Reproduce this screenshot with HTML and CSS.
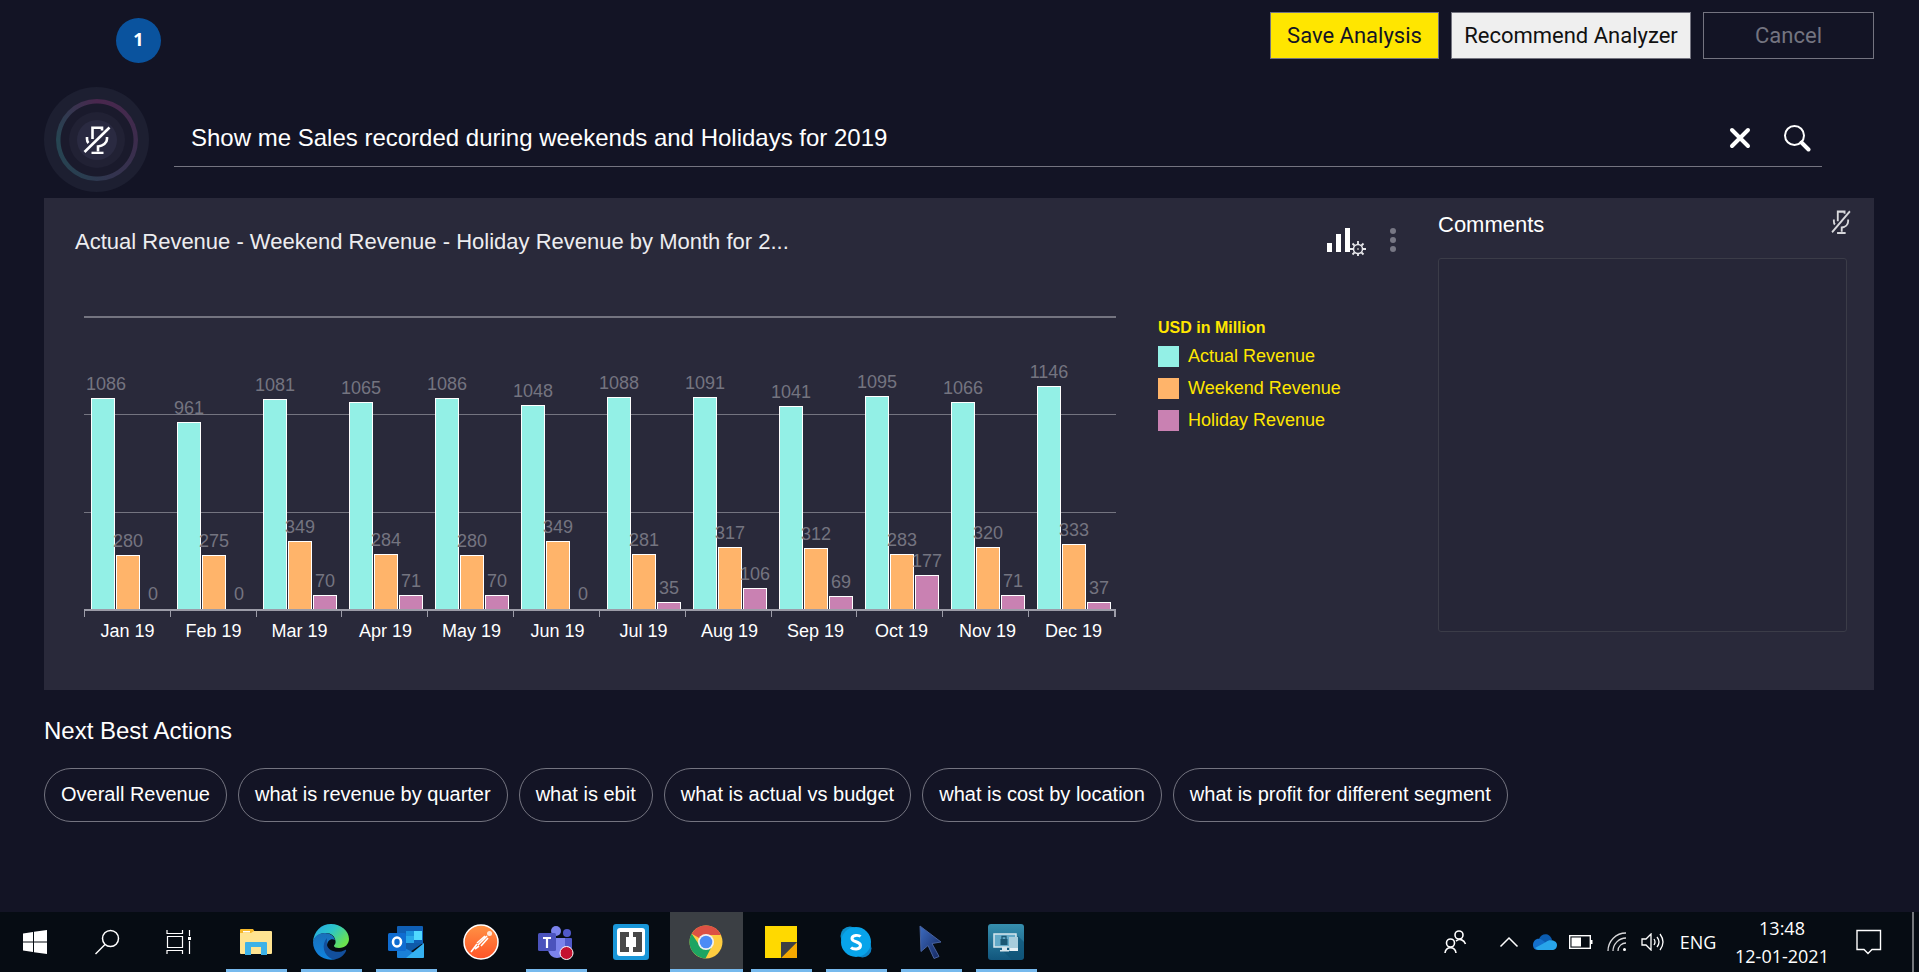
FILE: index.html
```html
<!DOCTYPE html>
<html lang="en">
<head>
<meta charset="utf-8">
<title>Revenue analysis</title>
<link rel="stylesheet" href="styles.css">
</head>
<body>
<svg class="sprite" aria-hidden="true">
  <symbol id="mic-off" viewBox="0 0 28 28">
    <g fill="none" stroke="currentColor" stroke-width="2.600">
      <path d="M9.500 13V1.800h9.500v2.700"/>
      <path d="M4 11v2c0 2 .5 3 1.500 4"/>
      <path d="M24 11v2c0 4-4 7-9 7.500v5"/>
      <path d="M8.500 27h12"/>
      <path d="M1.500 26L26.500 1.500"/>
    </g>
  </symbol>
</svg>

<main class="page">
  <header class="topbar">
    <span class="badge">1</span>
    <div class="actions">
      <button class="btn btn-save" type="button">Save Analysis</button>
      <button class="btn btn-recommend" type="button">Recommend Analyzer</button>
      <button class="btn btn-cancel" type="button">Cancel</button>
    </div>
  </header>

  <form class="search-row">
    <button class="mic" type="button" aria-label="Microphone off">
      <span class="mic-ring"><span class="mic-disc"><span class="mic-core"><svg class="mic-icon"><use href="#mic-off"/></svg></span></span></span>
    </button>
    <div class="search-field">
      <input class="search-input" type="text" aria-label="Ask a question" value="Show me Sales recorded during weekends and Holidays for 2019">
      <button class="icon-btn" type="button" aria-label="Clear">
        <svg width="22" height="22" viewBox="0 0 22 22"><path d="M3 3l16 16M19 3L3 19" stroke="#fff" stroke-width="4" stroke-linecap="round"/></svg>
      </button>
      <button class="icon-btn" type="button" aria-label="Search">
        <svg width="28" height="28" viewBox="0 0 28 28" fill="none" stroke="#fff"><circle cx="11.500" cy="11.500" r="9.500" stroke-width="2"/><path d="M18.500 18.500l7 7" stroke-width="4" stroke-linecap="round"/></svg>
      </button>
    </div>
  </form>

  <section class="panel">
    <div class="chart-area">
      <div class="chart-head">
        <h2 class="chart-title">Actual Revenue - Weekend Revenue - Holiday Revenue by Month for 2...</h2>
        <button class="icon-btn" type="button" aria-label="Chart settings">
          <svg width="42" height="32" viewBox="0 0 42 32"><path fill="#fff" d="M2 19h5v9H2zM11 10h5v18h-5zM20 4h5v24h-5z"/><g fill="none" stroke="#e8e8ec"><circle cx="33" cy="25" r="4.500" stroke-width="1.500"/><path stroke-width="1.800" d="M33 20v-3M33 30v2M28 25h-3M38 25h3M29.500 21.500l-2-2M36.500 28.500l2 2M29.500 28.500l-2 2M36.500 21.500l2-2"/></g><circle cx="33" cy="25" r="1" fill="#aaa"/></svg>
        </button>
        <button class="icon-btn" type="button" aria-label="More options">
          <svg width="8" height="26" viewBox="0 0 8 26" fill="#777784"><circle cx="4" cy="4" r="3"/><circle cx="4" cy="13" r="3"/><circle cx="4" cy="22" r="3"/></svg>
        </button>
      </div>
      <div class="chart-body">
        <div class="chart">
          <div class="plot">
            <div class="month"><div class="bar a clamp" style="--v:1086"><span>1086</span></div><div class="bar w" style="--v:280"><span>280</span></div><div class="bar zero"><span>0</span></div></div>
            <div class="month"><div class="bar a" style="--v:961"><span>961</span></div><div class="bar w" style="--v:275"><span>275</span></div><div class="bar zero"><span>0</span></div></div>
            <div class="month"><div class="bar a" style="--v:1081"><span>1081</span></div><div class="bar w" style="--v:349"><span>349</span></div><div class="bar h" style="--v:70"><span>70</span></div></div>
            <div class="month"><div class="bar a" style="--v:1065"><span>1065</span></div><div class="bar w" style="--v:284"><span>284</span></div><div class="bar h" style="--v:71"><span>71</span></div></div>
            <div class="month"><div class="bar a" style="--v:1086"><span>1086</span></div><div class="bar w" style="--v:280"><span>280</span></div><div class="bar h" style="--v:70"><span>70</span></div></div>
            <div class="month"><div class="bar a" style="--v:1048"><span>1048</span></div><div class="bar w" style="--v:349"><span>349</span></div><div class="bar zero"><span>0</span></div></div>
            <div class="month"><div class="bar a" style="--v:1088"><span>1088</span></div><div class="bar w" style="--v:281"><span>281</span></div><div class="bar h" style="--v:35"><span>35</span></div></div>
            <div class="month"><div class="bar a" style="--v:1091"><span>1091</span></div><div class="bar w" style="--v:317"><span>317</span></div><div class="bar h" style="--v:106"><span>106</span></div></div>
            <div class="month"><div class="bar a" style="--v:1041"><span>1041</span></div><div class="bar w" style="--v:312"><span>312</span></div><div class="bar h" style="--v:69"><span>69</span></div></div>
            <div class="month"><div class="bar a" style="--v:1095"><span>1095</span></div><div class="bar w" style="--v:283"><span>283</span></div><div class="bar h" style="--v:177"><span>177</span></div></div>
            <div class="month"><div class="bar a" style="--v:1066"><span>1066</span></div><div class="bar w" style="--v:320"><span>320</span></div><div class="bar h" style="--v:71"><span>71</span></div></div>
            <div class="month"><div class="bar a" style="--v:1146"><span>1146</span></div><div class="bar w" style="--v:333"><span>333</span></div><div class="bar h" style="--v:37"><span>37</span></div></div>
          </div>
          <div class="ticks"><i></i><i></i><i></i><i></i><i></i><i></i><i></i><i></i><i></i><i></i><i></i><i></i></div>
          <div class="months"><span>Jan 19</span><span>Feb 19</span><span>Mar 19</span><span>Apr 19</span><span>May 19</span><span>Jun 19</span><span>Jul 19</span><span>Aug 19</span><span>Sep 19</span><span>Oct 19</span><span>Nov 19</span><span>Dec 19</span></div>
        </div>
        <div class="legend">
          <h3 class="legend-title">USD in Million</h3>
          <ul class="legend-list">
            <li><i class="swatch a"></i>Actual Revenue</li>
            <li><i class="swatch w"></i>Weekend Revenue</li>
            <li><i class="swatch h"></i>Holiday Revenue</li>
          </ul>
        </div>
      </div>
    </div>
    <div class="comments">
      <div class="comments-head">
        <label class="comments-title" for="comments">Comments</label>
        <button class="icon-btn comments-mic" type="button" aria-label="Dictate a comment"><svg width="20" height="24" viewBox="0 0 28 28" preserveAspectRatio="none"><use href="#mic-off" width="28" height="28"/></svg></button>
      </div>
      <textarea class="comments-box" id="comments"></textarea>
    </div>
  </section>

  <section class="next">
    <h2 class="next-title">Next Best Actions</h2>
    <div class="chips">
      <button class="chip" type="button">Overall Revenue</button>
      <button class="chip" type="button">what is revenue by quarter</button>
      <button class="chip" type="button">what is ebit</button>
      <button class="chip" type="button">what is actual vs budget</button>
      <button class="chip" type="button">what is cost by location</button>
      <button class="chip" type="button">what is profit for different segment</button>
    </div>
  </section>
</main>

<footer class="taskbar">
  <div class="system">
    <button class="sys" type="button" aria-label="Start"><svg width="24" height="24" viewBox="0 0 24 24" fill="#fff"><path d="M0 3.400l10-1.400v9.500H0zM11 1.800L24 0v11.500H11zM0 12.500h10V22L0 20.600zM11 12.500h13V24l-13-1.800z"/></svg></button>
    <button class="sys" type="button" aria-label="Search"><svg width="26" height="26" viewBox="0 0 26 26" fill="none" stroke="#fff" stroke-width="1.500"><circle cx="16.500" cy="9.500" r="8"/><path d="M11 15.500L1.500 25"/></svg></button>
    <button class="sys" type="button" aria-label="Task view"><svg width="26" height="24" viewBox="0 0 26 24" fill="none" stroke="#fff" stroke-width="1.200"><path d="M1 0v3.500h15.500V0M1 24v-3.500h15.500V24M1.500 6.500h15v11h-15zM23.500 0v6M23.500 11v13"/><path d="M22 7h3v3h-3z" fill="#fff" stroke="none"/></svg></button>
  </div>
  <nav class="apps" aria-label="Open apps">
    <button class="app open" type="button" aria-label="File Explorer"><svg width="36" height="36" viewBox="0 0 36 36"><path fill="#f6b92b" d="M2 6q0-1 1-1h12l2 3v6H2z"/><path fill="#fff" d="M5 7h7v1.500H5z"/><path fill="#ffe491" d="M2 9h11l3-2h17q1 0 1 1v21q0 1-1 1H3q-1 0-1-1z"/><path fill="#3db2e8" d="M8 18h20q1 0 1 1v12h-6v-8H13v8H7V19q0-1 1-1z"/></svg></button>
    <button class="app open" type="button" aria-label="Edge"><svg width="36" height="36" viewBox="0 0 36 36"><defs><linearGradient id="e1" x1="0" y1="0" x2="1" y2=".6"><stop offset="0" stop-color="#25a4e8"/><stop offset=".5" stop-color="#2cc5c9"/><stop offset="1" stop-color="#6be34e"/></linearGradient><linearGradient id="e2" x1="0" y1="0" x2="0" y2="1"><stop offset="0" stop-color="#1a6fb8"/><stop offset="1" stop-color="#0f84e0"/></linearGradient></defs><path fill="url(#e1)" d="M0 18C1 7 8 0 18 0s18 7 18 15c0 5-4 9-10 9-3 0-5-1-5-2s2-2 1.500-5C22 12 18 9 13 9 7 9 2 12 0 18z"/><path fill="url(#e2)" d="M0 18C1 12 6 9 12 9c5 0 9 3 10 7-4-2-8 1-8 6 0 6 4 12 9 13C11 38 0 30 0 18z"/><path fill="#124f9c" d="M14 14c-6 6-4 18 6 21.500 6 0 11-4 13-8.500.5-1-.5-1.500-1-1-7 4-17 1-18-5-.2-3 0-5 0-7z"/></svg></button>
    <button class="app open" type="button" aria-label="Outlook"><svg width="36" height="36" viewBox="0 0 36 36"><path fill="#0f5fb5" d="M9 3q0-1 1-1h24q1 0 1 1v17H9z"/><path fill="#1a90dd" d="M18 7h8v8h-8z"/><path fill="#50d9ff" d="M26 7h8v9h-8z"/><path fill="#28a8ea" d="M18 12h8v7h-8z"/><path fill="#0f5aa8" d="M9 19h26l-13 9z"/><path fill="#1a80d8" d="M9 20l27 14H10q-1 0-1-1z"/><path fill="#35b1f0" d="M36 19v14q0 1-1 1H18z"/><rect y="9" width="18" height="18" rx="1.500" fill="#0f6cd0"/><ellipse cx="9" cy="18" rx="4" ry="4.500" fill="none" stroke="#fff" stroke-width="2.600"/></svg></button>
    <button class="app" type="button" aria-label="Postman"><svg width="36" height="36" viewBox="0 0 36 36"><defs><linearGradient id="p1" x1="0" y1="0" x2="0" y2="1"><stop offset="0" stop-color="#ff9345"/><stop offset="1" stop-color="#ff5327"/></linearGradient></defs><circle cx="18" cy="18" r="17" fill="url(#p1)" stroke="#fff" stroke-width="1.500"/><circle cx="26.500" cy="9.500" r="2.500" fill="#ffe7d8"/><path d="M24 12l-9 9M25 14l-7 8M22 12l-8 7M14 20l-6 8M16 22l-4 3" stroke="#fff" stroke-width="1.600" fill="none"/></svg></button>
    <button class="app open" type="button" aria-label="Teams"><svg width="36" height="36" viewBox="0 0 36 36"><circle cx="18" cy="7" r="5" fill="#7b83eb"/><circle cx="29" cy="9" r="4" fill="#5059c9"/><path fill="#5059c9" d="M24 14h9q1 0 1 1v8c0 4-4 6-8 4z"/><path fill="#7b83eb" d="M12 14h15v11c0 6-4 9-8 9s-8-3-9-8z"/><rect y="9" width="18" height="18" rx="1.500" fill="#4b53bc"/><path d="M5 14h8M9 14v10" stroke="#fff" stroke-width="2.200"/><circle cx="28.500" cy="29" r="6.500" fill="#c4122f" stroke="#fff"/></svg></button>
    <button class="app" type="button" aria-label="Brackets"><svg width="36" height="36" viewBox="0 0 36 36"><rect width="36" height="36" rx="3" fill="#1996d8"/><rect x="4" y="4" width="28" height="28" rx="3" fill="#fff"/><path fill="#484848" d="M7 8h9v5h-3v10h3v5H7zM29 8h-9v5h3v10h-3v5h9z"/></svg></button>
    <button class="app open active" type="button" aria-label="Chrome"><svg width="34" height="34" viewBox="0 0 34 34"><circle cx="17" cy="17" r="16.500" fill="#ffcd40"/><path fill="#dd5144" d="M17 17L2.700 8.700A16.500 16.500 0 0 1 32 10H17z"/><path fill="#1da462" d="M2.700 8.700A16.500 16.500 0 0 0 16.500 33.500L23 21l-12 0z"/><circle cx="17" cy="17" r="8" fill="#f1f1f1"/><circle cx="17" cy="17" r="6.300" fill="#4c8bf5"/></svg></button>
    <button class="app open" type="button" aria-label="Sticky Notes"><svg width="32" height="32" viewBox="0 0 32 32"><path fill="#ffd900" d="M0 0h32v16L16 32H0z"/><path fill="#f5a800" d="M32 16v16H16z"/><path fill="#3e3f44" d="M16 16h16L16 32z"/></svg></button>
    <button class="app open" type="button" aria-label="Skype"><svg width="34" height="34" viewBox="0 0 34 34"><circle cx="11" cy="11" r="9.500" fill="#0d8fca"/><circle cx="23.500" cy="23.500" r="9" fill="#0a84c8"/><circle cx="17" cy="17" r="15" fill="#08a4ea"/><path d="M21.500 11.500C20 10 13 9.500 13 13.500c0 4 8.500 2.500 8.500 7C21.500 25 14 24.500 12 22.500" fill="none" stroke="#fff" stroke-width="3"/></svg></button>
    <button class="app open" type="button" aria-label="Pointer"><svg width="26" height="36" viewBox="0 0 26 36"><defs><linearGradient id="c1" x1="0" y1="0" x2="1" y2="1"><stop offset="0" stop-color="#3d6cc0"/><stop offset="1" stop-color="#14265e"/></linearGradient></defs><path fill="url(#c1)" stroke="#47629f" d="M2 2l21 16-9 1.500 7 13-5 2-6-13-7 6z"/></svg></button>
    <button class="app open" type="button" aria-label="Remote desktop"><svg width="36" height="36" viewBox="0 0 36 36"><defs><linearGradient id="r1" x1="0" y1="0" x2="0" y2="1"><stop offset="0" stop-color="#368fae"/><stop offset="1" stop-color="#11567d"/></linearGradient></defs><rect width="36" height="36" rx="3" fill="url(#r1)"/><path fill="#0e5274" opacity=".6" d="M15 27l9 9h9l3-3V18l-6-6z"/><rect x="6" y="10" width="22" height="13" fill="#63aac8" stroke="#d6e6ed" stroke-width="1.500"/><path fill="#d6e6ed" d="M14 23h5v3h-5zM12 26h9v1.500h-9z"/><rect x="21" y="13" width="9" height="14" fill="#a8cddc"/><path fill="#e7f1f5" d="M22 24h8v3h-8z"/><rect x="12.500" y="15" width="7" height="6" fill="#1b5874"/><path d="M14 15v-2.500h4V15" fill="none" stroke="#1b5874" stroke-width="1.300"/></svg></button>
  </nav>
  <div class="tray">
    <button class="tray-btn people" type="button" aria-label="People"><svg width="24" height="24" viewBox="0 0 24 24" fill="none" stroke="#fff" stroke-width="1.600"><circle cx="16" cy="5" r="4"/><path d="M13 11c4-3 8-1 9.500 3"/><circle cx="7.500" cy="13" r="4"/><path d="M2 23c1-7 10-7 11 0"/></svg></button>
    <button class="tray-btn" type="button" aria-label="Show hidden icons"><svg width="20" height="12" viewBox="0 0 20 12"><path d="M1.500 10.500L10 2l8.500 8.500" fill="none" stroke="#fff" stroke-width="1.500"/></svg></button>
    <button class="tray-btn" type="button" aria-label="OneDrive"><svg width="24" height="16" viewBox="0 0 24 16"><path fill="#0b5cb0" d="M6 5c2-6 11-7 13 1l-8 4z"/><path fill="#1470cc" d="M0 11c0-5 5-8 9-5l6 4-10 6C2 16 0 14 0 11z"/><path fill="#28a5ea" d="M2 14l11-6c3-3 11-2 11 3 0 3-2 5-5 5H5z"/></svg></button>
    <button class="tray-btn" type="button" aria-label="Battery"><svg width="24" height="14" viewBox="0 0 24 14"><rect x=".7" y=".7" width="20.600" height="12.600" fill="none" stroke="#fff" stroke-width="1.400"/><path fill="#fff" d="M2.500 2.500H12v9H2.500zM22 5h1.500v4H22z"/></svg></button>
    <button class="tray-btn" type="button" aria-label="Wireless network"><svg width="20" height="20" viewBox="0 0 20 20" fill="none" stroke="#d8d8da" stroke-width="1.300"><path d="M1 19C1 9 9 1 19 1M6 19C6 12 12 6 19 6M11 19c0-5 4-8 8-8"/><circle cx="17.500" cy="17.500" r="1.500" fill="#fff" stroke="none"/></svg></button>
    <button class="tray-btn" type="button" aria-label="Volume"><svg width="24" height="18" viewBox="0 0 24 18" fill="none" stroke="#fff" stroke-width="1.300"><path d="M1 6h4l5-5v16l-5-5H1z"/><path d="M13 6q2 3 0 6M16 4q4 5 0 10M19 1q6 8 0 16"/></svg></button>
    <button class="tray-btn lang" type="button">ENG</button>
    <button class="tray-btn clock" type="button"><time>13:48</time><time>12-01-2021</time></button>
    <button class="tray-btn notes" type="button" aria-label="Notifications"><svg width="26" height="26" viewBox="0 0 26 26"><path d="M1 1.500h23.500v19H16l-4 4-4-4H1z" fill="none" stroke="#fff" stroke-width="1.400"/></svg></button>
  </div>
</footer>
</body>
</html>
```

FILE: styles.css
```css
* { box-sizing: border-box; }

body {
  margin: 0;
  min-height: 100vh;
  display: flex;
  flex-direction: column;
  background: #131425;
  color: #fff;
  font-family: "Liberation Sans", Arial, sans-serif;
}

button {
  margin: 0;
  padding: 0;
  border: 0;
  background: none;
  color: inherit;
  font-family: inherit;
}

h2, h3, ul { margin: 0; padding: 0; list-style: none; }
svg { display: block; }
.sprite { position: absolute; width: 0; height: 0; }

.page { flex: 1; padding: 12px 45px 0 44px; }

.topbar {
  display: flex;
  justify-content: space-between;
  align-items: flex-start;
}
.badge {
  width: 45px;
  height: 45px;
  margin: 6px 0 0 72px;
  border-radius: 50%;
  background: #0a539e;
  font: bold 18px/43px "Noto Sans", sans-serif;
  text-align: center;
}
.actions { display: flex; gap: 12px; }
.btn {
  height: 47px;
  border: 1px solid #747480;
  font: 22px "Roboto", sans-serif;
}
.btn-save { width: 169px; background: #ffe600; color: #131425; }
.btn-recommend { width: 240px; background: #efefef; color: #111; }
.btn-cancel { width: 171px; color: #747480; }

.search-row {
  display: flex;
  align-items: center;
  gap: 25px;
  margin: 24px 52px 6px 0;
}
.mic, .mic span { display: grid; place-items: center; border-radius: 50%; }
.mic { width: 105px; height: 105px; background: #1d1f31; }
.mic-ring {
  width: 82px;
  height: 82px;
  background:
    radial-gradient(circle, #1a1a2c 0 36px, transparent 37px),
    conic-gradient(#4a274e, #3c2c4c 25%, #32344f 45%, #2a3d50 55%, #264552 75%, #303a50 85%, #4a274e);
}
.mic-disc { width: 56px; height: 56px; background: #212134; }
.mic-core { width: 40px; height: 40px; background: #2a2a41; }
.mic-icon { width: 28px; height: 28px; }
.search-field {
  flex: 1;
  display: flex;
  align-items: center;
  gap: 32px;
  height: 54px;
  padding: 0 11px 3px 17px;
  border-bottom: 1px solid #747480;
}
.search-input {
  flex: 1;
  min-width: 0;
  padding: 0;
  border: 0;
  outline: 0;
  background: none;
  color: #fff;
  font: 24px "Liberation Sans", Arial, sans-serif;
}

.panel {
  display: grid;
  grid-template-columns: minmax(0, 1fr) 409px;
  gap: 36px;
  padding: 12px 27px 47px 31px;
  background: #29293a;
}
.chart-head {
  display: flex;
  align-items: center;
  height: 60px;
  gap: 22px;
  padding-right: 5px;
}
.chart-title {
  flex: 1;
  padding-top: 4px;
  font-size: 22px;
  font-weight: 400;
  color: #ededf0;
}
.chart-body {
  display: flex;
  gap: 42px;
  margin: 46px 0 0 9px;
}
.chart { flex: 1; }
.plot {
  display: flex;
  height: 295px;
  border-bottom: 2px solid #9c9ca8;
  background:
    linear-gradient(#747480, #747480) 0 0 / 100% 2px no-repeat,
    linear-gradient(#747480, #747480) 0 98px / 100% 1px no-repeat,
    linear-gradient(#747480, #747480) 0 196px / 100% 1px no-repeat;
}
.month {
  flex: 1;
  display: flex;
  justify-content: center;
  align-items: flex-end;
  gap: 1px;
  padding-left: 2px;
}
.bar {
  display: flex;
  justify-content: center;
  width: 24px;
  height: calc(var(--v) * 292px / 1500);
  border: 1px solid #fff;
  border-bottom: 0;
}
.bar span {
  z-index: 1;
  height: 24px;
  margin-top: -27px;
  color: #747480;
  font-size: 18px;
  line-height: 24px;
}
.bar.clamp span { margin-left: 6px; }
.bar.zero { height: 0; border-color: transparent; }
.a { background: #93f0e6; }
.w { background: #ffb46a; }
.h { background: #c981b2; }
.ticks { display: flex; height: 6px; }
.ticks i { flex: 1; border-left: 1px solid #9c9ca8; }
.ticks i:last-child { border-right: 2px solid #9c9ca8; }
.months {
  display: flex;
  padding-top: 2px;
  font-size: 18px;
  line-height: 24px;
}
.months span { flex: 1; padding-left: 1px; text-align: center; }

.legend { width: 244px; padding-top: 2px; color: #ffe600; }
.legend-title { font-size: 16px; line-height: 20px; }
.legend-list { display: grid; gap: 8px; margin-top: 6px; }
.legend-list li {
  display: flex;
  align-items: center;
  gap: 9px;
  font-size: 18px;
  line-height: 24px;
}
.swatch { width: 21px; height: 21px; }

.comments { display: flex; flex-direction: column; padding-bottom: 11px; }
.comments-head {
  display: flex;
  justify-content: space-between;
  height: 48px;
}
.comments-title { font-size: 22px; line-height: 30px; }
.comments-mic { align-self: flex-start; margin-right: -4px; color: #d8d8dc; }
.comments-box {
  flex: 1;
  resize: none;
  border: 1px solid #3b3c48;
  border-radius: 3px;
  background: #262637;
  color: #fff;
}

.next { padding-top: 26px; }
.next-title { font-size: 24px; line-height: 30px; font-weight: 400; }
.chips {
  display: flex;
  flex-wrap: wrap;
  gap: 11px;
  margin-top: 22px;
}
.chip {
  height: 54px;
  padding: 0 16px 2px;
  border: 1px solid #747480;
  border-radius: 27px;
  font-size: 20px;
}

.taskbar {
  display: flex;
  justify-content: space-between;
  height: 60px;
  background: #060c13;
}
.system { display: flex; }
.sys { display: grid; place-items: center; width: 72px; height: 60px; padding-right: 2px; }
.apps { display: flex; flex: 1; gap: 14px; padding-left: 10px; }
.app {
  display: grid;
  place-items: center;
  width: 61px;
  height: 60px;
  padding-right: 2px;
}
.app.open { border-bottom: 3px solid #76b9ed; padding-top: 3px; }
.app.active { width: 73px; margin: 0 -6px; background: #3b3f44; }
.tray {
  display: grid;
  grid-template-columns: 72px 36px 36px 36px 36px 36px 54px 114px 73px;
  margin-right: 5px;
  border-right: 2px solid #74777c;
}
.tray-btn { display: grid; place-items: center; }
.tray-btn.lang, .tray-btn.clock { font: 18px/28px "Open Sans", "Noto Sans", sans-serif; }
.tray-btn.clock { align-content: center; }
.tray-btn.notes { padding-right: 14px; }
```
